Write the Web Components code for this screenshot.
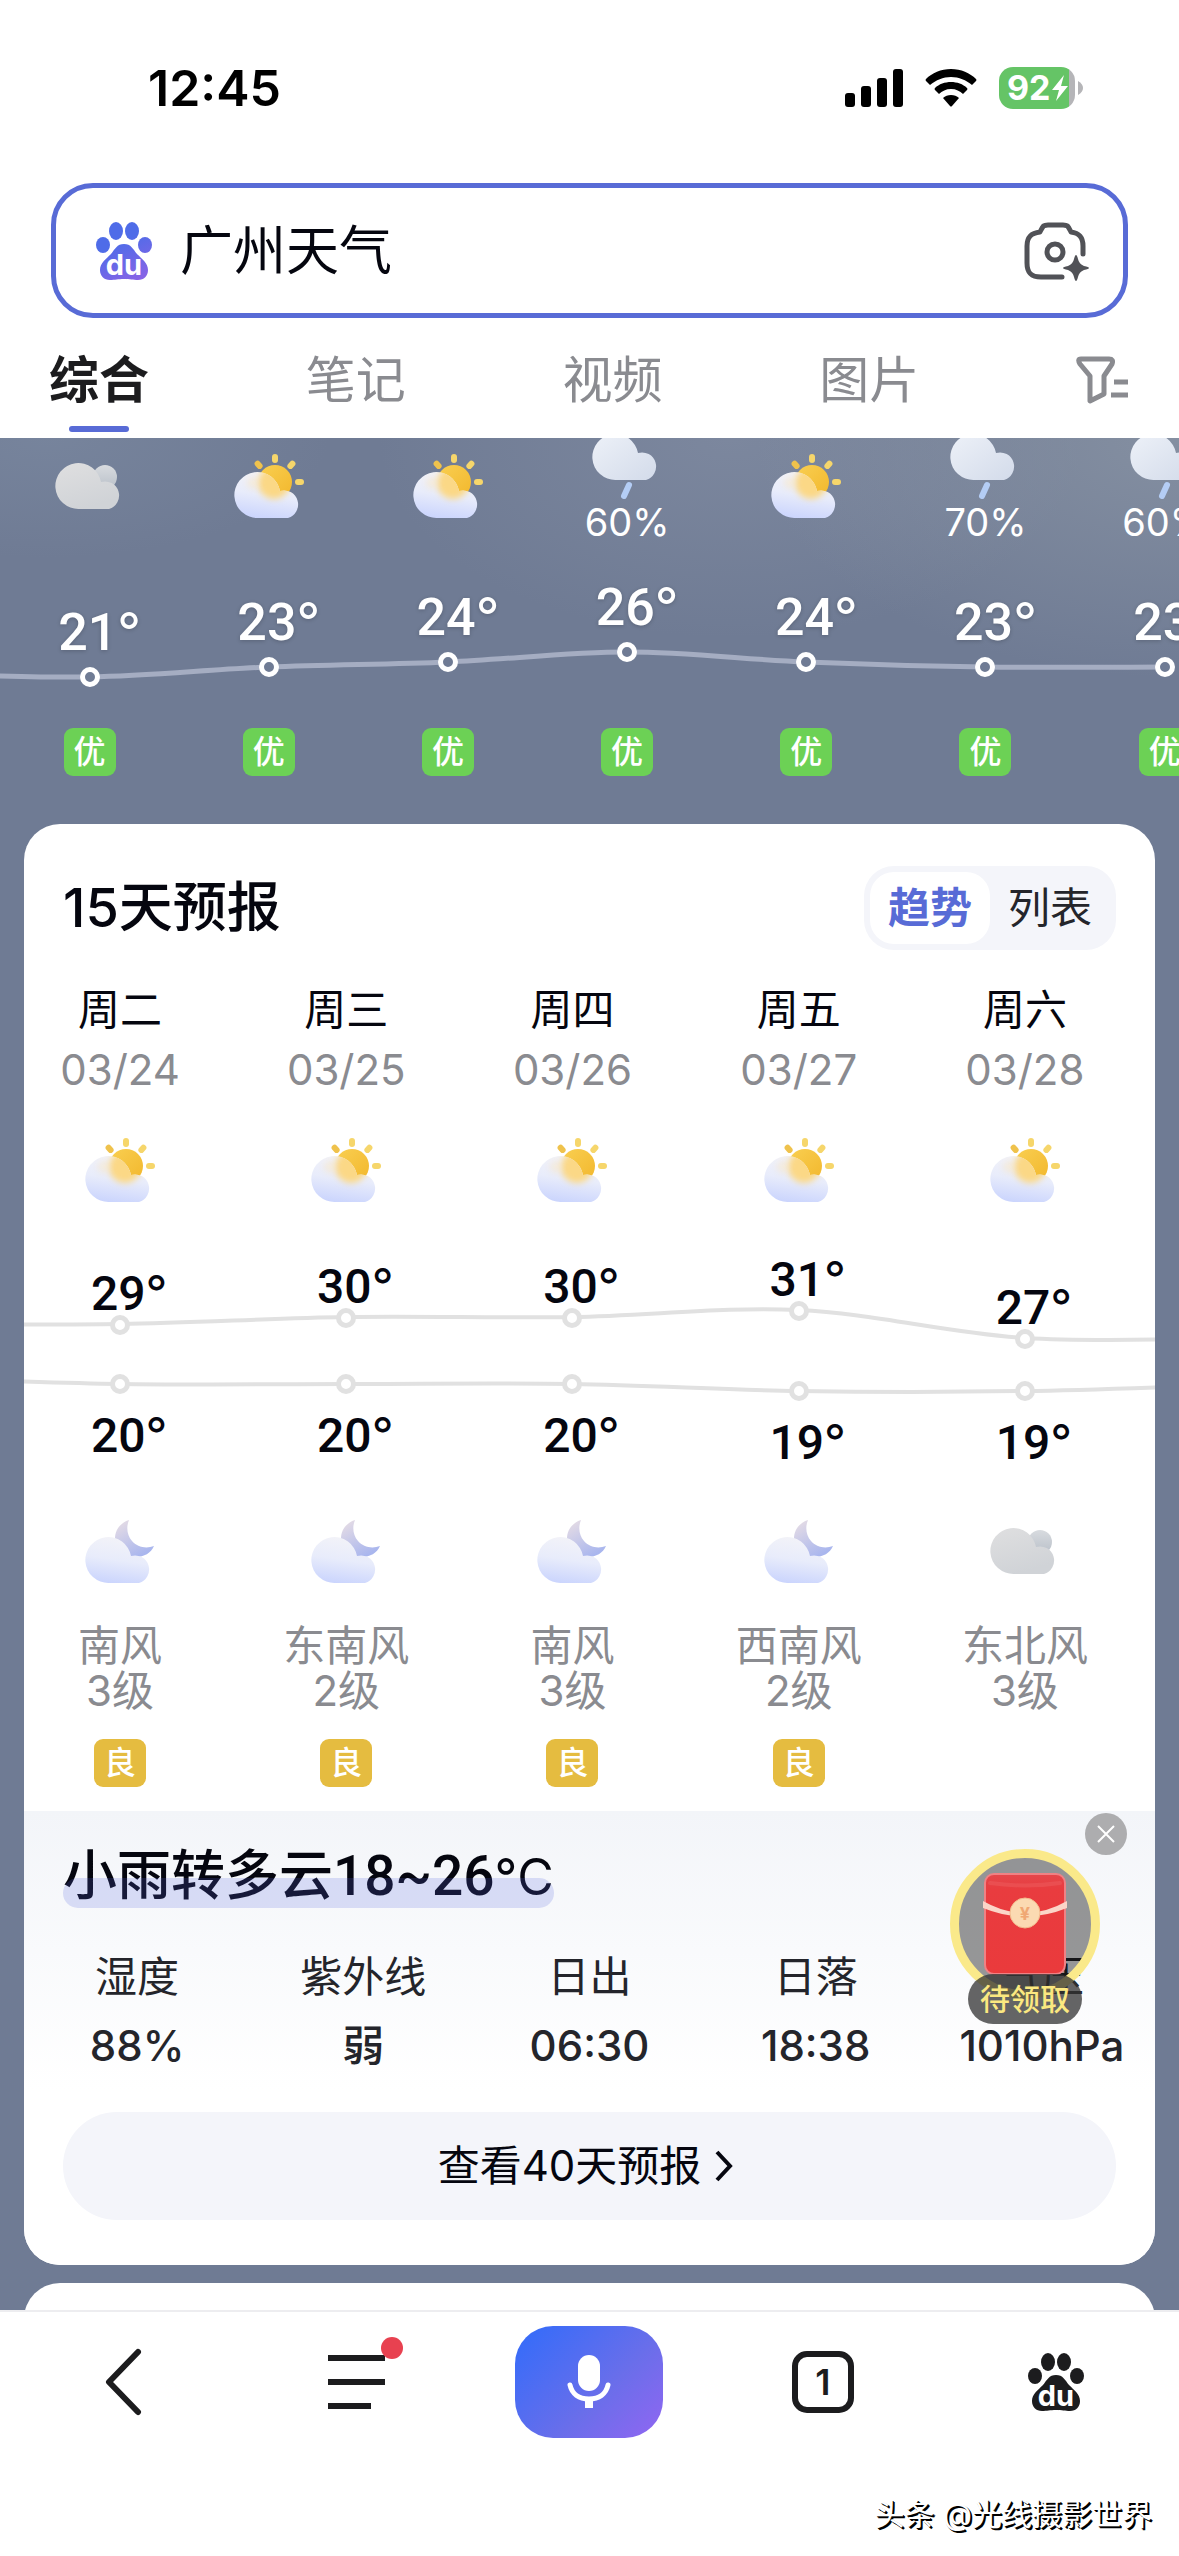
<!DOCTYPE html>
<html lang="zh-CN">
<head>
<meta charset="utf-8">
<meta name="viewport" content="width=device-width, initial-scale=1">
<title>广州天气</title>
<style>
	body {
		margin: 0;
		font-family: Inter, "Noto Sans CJK SC", sans-serif;
		font-size: 42px;
		line-height: 60px;
		color: #05060f;
		background: #fff;
		--brand: #586bd6;
		--sky: #6f7b94;
		--soft: #f4f5fa;
		--muted: #8a8b90;
	}
</style>
</head>
<body>
<weather-page></weather-page>

<script>
const RESET = `
	* { box-sizing: border-box; }
	button, input {
		font: inherit;
		color: inherit;
		margin: 0;
		padding: 0;
		border: 0;
		background: none;
	}
	ul, dl, dd, h2, p { margin: 0; padding: 0; }
	ul { list-style: none; }
	h2 { font-weight: 500; }
	a { color: inherit; text-decoration: none; }
	svg { display: block; }
`;

const HOURS = [
	{ icon: 'cloudy', temp: 21, air: '优' },
	{ icon: 'sunny', temp: 23, air: '优' },
	{ icon: 'sunny', temp: 24, air: '优' },
	{ icon: 'rain', chance: '60%', temp: 26, air: '优' },
	{ icon: 'sunny', temp: 24, air: '优' },
	{ icon: 'rain', chance: '70%', temp: 23, air: '优' },
	{ icon: 'rain', chance: '60%', temp: 23, air: '优' },
];

const DAYS = [
	{ week: '周二', date: '03/24', day: 'sunny', hi: 29, lo: 20, night: 'moon', wind: '南风', level: '3级', air: '良' },
	{ week: '周三', date: '03/25', day: 'sunny', hi: 30, lo: 20, night: 'moon', wind: '东南风', level: '2级', air: '良' },
	{ week: '周四', date: '03/26', day: 'sunny', hi: 30, lo: 20, night: 'moon', wind: '南风', level: '3级', air: '良' },
	{ week: '周五', date: '03/27', day: 'sunny', hi: 31, lo: 19, night: 'moon', wind: '西南风', level: '2级', air: '良' },
	{ week: '周六', date: '03/28', day: 'sunny', hi: 27, lo: 19, night: 'cloudy', wind: '东北风', level: '3级', air: '' },
];

// smooth curve through a list of [x, y]
function curve(points) {
	let d = `M${points[0]}`;
	for (let i = 0; i < points.length - 1; i++) {
		const p0 = points[i - 1] || points[i];
		const p1 = points[i];
		const p2 = points[i + 1];
		const p3 = points[i + 2] || p2;
		d += `C${p1[0] + (p2[0] - p0[0]) / 6},${p1[1] + (p2[1] - p0[1]) / 6}`
			+ ` ${p2[0] - (p3[0] - p1[0]) / 6},${p2[1] - (p3[1] - p1[1]) / 6} ${p2}`;
	}
	return d;
}

class PawLogo extends HTMLElement {
	constructor() {
		super();
		this.attachShadow({ mode: 'open' });
		this.shadowRoot.innerHTML = `
			<style>
				:host { display: block; }
				svg { display: block; width: 56px; height: 60px; }
				.ink { fill: url(#ink); }
				:host([mono]) .ink { fill: #1c1c1e; }
				text { font: 700 29px Inter, sans-serif; fill: #fff; }
			</style>
			<svg viewBox="0 0 56 60" aria-hidden="true">
				<defs>
					<linearGradient id="ink" gradientUnits="userSpaceOnUse" x1="14" y1="0" x2="44" y2="60">
						<stop offset=".35" stop-color="#4f6ce8"/>
						<stop offset="1" stop-color="#8a63e6"/>
					</linearGradient>
				</defs>
				<g class="ink">
					<ellipse cx="20" cy="10" rx="7" ry="9"/>
					<ellipse cx="36" cy="10" rx="7" ry="9"/>
					<ellipse cx="7" cy="24" rx="7" ry="8"/>
					<ellipse cx="49" cy="24" rx="7" ry="8"/>
					<path d="M28 23c7 0 9 5 13 10 5 5 11 9 11 16 0 6-4 10-10 10-5 0-8-1-14-1s-9 1-14 1c-6 0-10-4-10-10 0-7 6-11 11-16 4-5 6-10 13-10z"/>
				</g>
				<text x="28" y="54" text-anchor="middle">du</text>
			</svg>
		`;
	}
}
customElements.define('paw-logo', PawLogo);

class WeatherIcon extends HTMLElement {
	constructor() {
		super();
		this.attachShadow({ mode: 'open' });
	}

	connectedCallback() {
		const cloud = 'M25 68A23 23 0 1 1 47 41A14 14 0 1 1 55 68Z';
		const shapes = {
			sunny: `
				<g fill="#f6d66b">
					<rect x="39" y="4" width="6" height="9" rx="3"/>
					<rect x="39" y="4" width="6" height="9" rx="3" transform="rotate(42 42 33)"/>
					<rect x="39" y="4" width="6" height="9" rx="3" transform="rotate(-42 42 33)" fill="#efc24c"/>
					<rect x="62" y="29" width="9" height="6" rx="3"/>
				</g>
				<circle cx="42" cy="32" r="17" fill="url(#sun)"/>
				<path d="${cloud}" fill="url(#cloud)"/>
				<g clip-path="url(#clip)">
					<circle cx="41" cy="33" r="16" fill="#fbd886" filter="url(#soft)"/>
					<circle cx="20" cy="33" r="6" fill="#fbe6c0" opacity=".5" filter="url(#soft)"/>
				</g>`,
			moon: `
				<path d="M45 5C36 8 31 15 31 24C31 36 40 43 52 42C60 42 67 38 70 31C62 34 53 32 48 26C43 20 42 12 45 5Z" fill="url(#moon)"/>
				<path d="${cloud}" fill="url(#cloud)"/>`,
			cloudy: `
				<circle cx="51" cy="27" r="12" fill="url(#back)"/>
				<path d="${cloud}" fill="url(#grey)" transform="translate(0 -9)"/>`,
			rain: `
				<path d="${cloud}" fill="url(#wet)" transform="translate(0 -18)"/>
				<path d="M38 55L33 66" stroke="#b4cdf5" stroke-width="6" stroke-linecap="round"/>`,
		};
		this.shadowRoot.innerHTML = `
			<style>
				:host { display: block; width: 72px; height: 72px; }
				svg { display: block; width: 100%; height: 100%; }
			</style>
			<svg viewBox="0 0 72 72" fill="none" aria-hidden="true">
				<defs>
					<linearGradient id="cloud" x1=".6" y1="0" x2=".4" y2="1">
						<stop offset="0" stop-color="#f3f3f8"/>
						<stop offset=".5" stop-color="#e8ecfb"/>
						<stop offset="1" stop-color="#cbd5fd"/>
					</linearGradient>
					<linearGradient id="sun" x1="0" y1="0" x2="1" y2="1">
						<stop offset="0" stop-color="#f9cf52"/>
						<stop offset="1" stop-color="#f2b72c"/>
					</linearGradient>
					<linearGradient id="moon" x1="0" y1="0" x2=".6" y2="1">
						<stop offset="0" stop-color="#eadfe4"/>
						<stop offset="1" stop-color="#a9b6ee"/>
					</linearGradient>
					<linearGradient id="grey" x1="0" y1="0" x2=".4" y2="1">
						<stop offset="0" stop-color="#dfdfe0"/>
						<stop offset="1" stop-color="#d0d3d7"/>
					</linearGradient>
					<linearGradient id="back" x1="0" y1="0" x2="0" y2="1">
						<stop offset="0" stop-color="#d8dbdf"/>
						<stop offset="1" stop-color="#b9c0c9"/>
					</linearGradient>
					<linearGradient id="wet" x1="0" y1="0" x2="1" y2="1">
						<stop offset="0" stop-color="#edf1f8"/>
						<stop offset="1" stop-color="#d3dbea"/>
					</linearGradient>
					<filter id="soft" x="-50%" y="-50%" width="200%" height="200%">
						<feGaussianBlur stdDeviation="3"/>
					</filter>
					<clipPath id="clip"><path d="${cloud}"/></clipPath>
				</defs>
				${shapes[this.getAttribute('name')] || ''}
			</svg>
		`;
	}
}
customElements.define('weather-icon', WeatherIcon);

class AirBadge extends HTMLElement {
	constructor() {
		super();
		this.attachShadow({ mode: 'open' });
		this.shadowRoot.innerHTML = `
			<style>
				:host {
					display: block;
					width: 52px;
					border-radius: 9px;
					background: #6cd155;
					color: #fff;
					font-size: 32px;
					font-weight: 500;
					line-height: 48px;
					text-align: center;
				}
				:host([grade="fair"]) { background: #e5bc40; }
			</style>
			<slot></slot>
		`;
	}
}
customElements.define('air-badge', AirBadge);

class StatusBar extends HTMLElement {
	constructor() {
		super();
		this.attachShadow({ mode: 'open' });
		this.shadowRoot.innerHTML = `
			<style>
				${RESET}
				:host {
					display: flex;
					align-items: center;
					justify-content: space-between;
					padding: 63px 96px 70px 148px;
					font-size: 50px;
					font-weight: 600;
					line-height: 50px;
					color: #000;
				}
				.icons { display: flex; align-items: center; gap: 22px; }
				.battery { display: flex; align-items: center; gap: 3px; }
				.level {
					display: flex;
					align-items: center;
					width: 76px;
					height: 42px;
					padding-left: 8px;
					border-radius: 14px;
					background: linear-gradient(90deg, #65c466 92%, #b5b5b8 92%);
					color: #fff;
					font-size: 34px;
					font-weight: 700;
				}
			</style>
			<span>12:45</span>
			<div class="icons">
				<svg width="58" height="38" viewBox="0 0 58 38" aria-hidden="true">
					<rect y="24" width="10" height="14" rx="3"/>
					<rect x="16" y="17" width="10" height="21" rx="3"/>
					<rect x="32" y="9" width="10" height="29" rx="3"/>
					<rect x="48" y="0" width="10" height="38" rx="3"/>
				</svg>
				<svg width="52" height="38" viewBox="0 0 52 38" aria-hidden="true">
					<path d="M26 0C36 0 45 4 51 10Q52 11 51 12L47 16C41 11 34 8 26 8S11 11 5 16L1 12Q0 11 1 10C7 4 16 0 26 0Z"/>
					<path d="M26 13C32 13 38 15 42 19Q43 20 42 21L38 25C35 22 31 20 26 20S17 22 14 25L10 21Q9 20 10 19C14 15 20 13 26 13Z"/>
					<path d="M26 26C29 26 32 27 34 29L27 37Q26 38 25 37L18 29C20 27 23 26 26 26Z"/>
				</svg>
				<div class="battery">
					<div class="level">92<svg width="18" height="26" viewBox="0 0 18 26" aria-hidden="true"><path d="M13 0L1 15h7L5 26 17 11h-7z" fill="#fff"/></svg></div>
					<svg width="5" height="14" viewBox="0 0 5 14" aria-hidden="true"><path d="M0 0Q5 3 5 7T0 14Z" fill="#b5b5b8"/></svg>
				</div>
			</div>
		`;
	}
}
customElements.define('status-bar', StatusBar);

class SearchBox extends HTMLElement {
	constructor() {
		super();
		this.attachShadow({ mode: 'open' });
	}

	connectedCallback() {
		this.shadowRoot.innerHTML = `
			<style>
				${RESET}
				:host { display: block; margin: 0 51px; }
				form {
					display: flex;
					align-items: center;
					height: 135px;
					padding: 0 34px 0 40px;
					border: 5px solid var(--brand);
					border-radius: 42px;
				}
				input {
					flex: 1;
					min-width: 0;
					margin-left: 28px;
					font-size: 53px;
					outline: none;
				}
			</style>
			<form>
				<paw-logo></paw-logo>
				<input type="text" aria-label="搜索" value="${this.getAttribute('value')}">
				<button type="button" aria-label="拍照搜索">
					<svg width="66" height="60" viewBox="0 0 66 60" fill="none" aria-hidden="true">
						<g stroke="#515257" stroke-width="5" stroke-linecap="round" stroke-linejoin="round">
							<path d="M39 56H18C8 56 4 52 4 42V25C4 16 8 12 17 11C20 5 20 4 25 4H40C45 4 45 5 48 11C56 12 60 16 60 25V33"/>
							<circle cx="32" cy="31" r="8"/>
						</g>
						<path d="M53 34Q54 34 55 38Q56 43 61 45Q66 46 66 47Q66 48 61 49Q56 51 55 56Q54 60 53 60Q52 60 51 56Q50 51 45 49Q40 48 40 47Q40 46 45 45Q50 43 51 38Q52 34 53 34Z" fill="#515257"/>
					</svg>
				</button>
			</form>
		`;
	}
}
customElements.define('search-box', SearchBox);

class ResultTabs extends HTMLElement {
	constructor() {
		super();
		this.attachShadow({ mode: 'open' });
		this.shadowRoot.innerHTML = `
			<style>
				${RESET}
				:host { display: block; }
				nav {
					display: flex;
					justify-content: space-between;
					align-items: flex-start;
					padding: 32px 51px 6px 49px;
					font-size: 50px;
					color: var(--muted);
				}
				a { padding-bottom: 22px; }
				a.active {
					padding-bottom: 0;
					color: #1c1c1e;
					font-weight: 700;
				}
				a.active::after {
					content: '';
					display: block;
					width: 60px;
					height: 6px;
					margin: 16px auto 0;
					border-radius: 3px;
					background: var(--brand);
				}
			</style>
			<nav>
				<a class="active" href="#all">综合</a>
				<a href="#notes">笔记</a>
				<a href="#video">视频</a>
				<a href="#images">图片</a>
				<button type="button" aria-label="筛选">
					<svg width="52" height="60" viewBox="0 0 52 60" fill="none" stroke="currentColor" stroke-width="5" stroke-linejoin="round" aria-hidden="true">
						<path d="M5 9H33Q38 9 36 14L28 26V44L14 51V26L4 14Q1 9 5 9Z"/>
						<path d="M38 32H52M35 45H52"/>
					</svg>
				</button>
			</nav>
		`;
	}
}
customElements.define('result-tabs', ResultTabs);

class HourlyForecast extends HTMLElement {
	constructor() {
		super();
		this.attachShadow({ mode: 'open' });
	}

	connectedCallback() {
		const top = (t) => (26 - t) * 5 + 36;
		const points = HOURS.map((h, i) => [i * 100 + 50, top(h.temp) + 74]);
		points.unshift([-50, points[0][1] - 4]);
		this.shadowRoot.innerHTML = `
			<style>
				${RESET}
				:host { display: block; overflow: hidden; color: #fff; }
				/* six and a half hours fit in the window */
				.rail {
					position: relative;
					display: grid;
					grid-template-columns: repeat(7, 1fr);
					width: calc(100% * 7 / 6.58);
					margin-top: -8px;
					padding-bottom: 48px;
				}
				li { display: grid; justify-items: center; }
				.sky {
					display: flex;
					flex-direction: column;
					align-items: center;
					justify-content: center;
					height: 112px;
					font-size: 38px;
					line-height: 40px;
				}
				.plot {
					display: flex;
					flex-direction: column;
					align-items: center;
					gap: 4px;
					height: 186px;
				}
				.temp {
					padding-left: 20px;
					font-family: Roboto, sans-serif;
					font-size: 52px;
					font-weight: 500;
					text-shadow: 0 1px 4px rgba(0, 0, 0, .2);
				}
				.temp span { font: 400 52px/52px Inter, sans-serif; }
				.dot {
					width: 20px;
					height: 20px;
					border: 5px solid #fff;
					border-radius: 50%;
					background: var(--sky);
					z-index: 1;
				}
				.line {
					position: absolute;
					left: 0;
					top: 112px;
					width: 100%;
					height: 186px;
				}
			</style>
			<ul class="rail">
				<svg class="line" viewBox="0 0 700 186" preserveAspectRatio="none" fill="none" aria-hidden="true">
					<path d="${curve(points)}" stroke="#a5adc2" stroke-width="5" vector-effect="non-scaling-stroke"/>
				</svg>
				${HOURS.map((h) => `
					<li>
						<div class="sky">
							<weather-icon name="${h.icon}"></weather-icon>
							${h.chance ? `<span>${h.chance}</span>` : ''}
						</div>
						<div class="plot" style="padding-top: ${top(h.temp)}px">
							<div class="temp">${h.temp}<span>°</span></div>
							<i class="dot"></i>
						</div>
						<air-badge>${h.air}</air-badge>
					</li>`).join('')}
			</ul>
		`;
	}
}
customElements.define('hourly-forecast', HourlyForecast);

class DailyForecast extends HTMLElement {
	constructor() {
		super();
		this.attachShadow({ mode: 'open' });
	}

	connectedCallback() {
		const hiTop = (t) => (31 - t) * 7 + 52;
		const loTop = (t) => (20 - t) * 7 + 168;
		const x = (i) => i * 100 + 50;
		// the first and last values lie outside the window
		const hi = [29, ...DAYS.map((d) => d.hi), 27].map((t, i) => [x(i - 1), hiTop(t) + 52]);
		const lo = [21, ...DAYS.map((d) => d.lo), 20].map((t, i) => [x(i - 1), loTop(t) + 10]);
		this.shadowRoot.innerHTML = `
			<style>
				${RESET}
				:host { display: block; overflow: hidden; }
				.rail {
					position: relative;
					display: grid;
					grid-template-columns: repeat(5, 1fr);
					margin: 30px 17px 0 -17px;
					padding-bottom: 24px;
				}
				li {
					display: flex;
					flex-direction: column;
					align-items: center;
				}
				.date, .wind { color: var(--muted); }
				.day { margin-top: 34px; }
				.plot {
					display: grid;
					justify-items: center;
					align-items: start;
					height: 309px;
				}
				.hi, .lo {
					grid-area: 1 / 1;
					display: flex;
					flex-direction: column;
					align-items: center;
				}
				.lo { gap: 20px; }
				.temp {
					padding-left: 18px;
					font-family: Roboto, sans-serif;
					font-size: 48px;
					font-weight: 500;
					line-height: 42px;
				}
				.temp span { font: 400 48px/42px Inter, sans-serif; }
				.dot {
					width: 20px;
					height: 20px;
					border: 5px solid #e1e1e1;
					border-radius: 50%;
					background: #fff;
					z-index: 1;
				}
				.wind {
					margin-top: 36px;
					line-height: 45px;
					text-align: center;
				}
				air-badge { margin-top: 26px; }
				.line {
					position: absolute;
					left: 0;
					top: 226px;
					width: 100%;
					height: 309px;
					overflow: visible;
				}
			</style>
			<ul class="rail">
				<svg class="line" viewBox="0 0 500 309" preserveAspectRatio="none" fill="none" stroke="#e1e1e1" stroke-width="4" aria-hidden="true">
					<path d="${curve(hi)}" vector-effect="non-scaling-stroke"/>
					<path d="${curve(lo)}" vector-effect="non-scaling-stroke"/>
				</svg>
				${DAYS.map((d) => `
					<li>
						<div>${d.week}</div>
						<div class="date">${d.date}</div>
						<weather-icon class="day" name="${d.day}"></weather-icon>
						<div class="plot">
							<div class="hi" style="padding-top: ${hiTop(d.hi)}px">
								<div class="temp">${d.hi}<span>°</span></div>
								<i class="dot"></i>
							</div>
							<div class="lo" style="padding-top: ${loTop(d.lo)}px">
								<i class="dot"></i>
								<div class="temp">${d.lo}<span>°</span></div>
							</div>
						</div>
						<weather-icon name="${d.night}"></weather-icon>
						<div class="wind">${d.wind}<br>${d.level}</div>
						${d.air ? `<air-badge grade="fair">${d.air}</air-badge>` : ''}
					</li>`).join('')}
			</ul>
		`;
	}
}
customElements.define('daily-forecast', DailyForecast);

class WeatherSummary extends HTMLElement {
	constructor() {
		super();
		this.attachShadow({ mode: 'open' });
		this.shadowRoot.innerHTML = `
			<style>
				${RESET}
				:host {
					display: block;
					padding: 30px 0 45px;
					background: linear-gradient(#f3f5f9, #fff 280px);
				}
				h2 {
					position: relative;
					width: fit-content;
					margin: 0 39px;
					font-size: 54px;
					line-height: 70px;
				}
				h2 b { font: 500 55px/70px Roboto, sans-serif; }
				h2 span { font-weight: 400; font-size: 50px; }
				h2::after {
					content: '';
					position: absolute;
					left: 0;
					right: 0;
					bottom: 4px;
					height: 30px;
					border-radius: 15px;
					background: rgba(90, 107, 225, .2);
				}
				dl {
					display: grid;
					grid-template-columns: repeat(5, 1fr);
					margin-top: 35px;
					text-align: center;
					color: #24252b;
				}
				dl div { display: grid; justify-content: center; gap: 9px; }
				dd { font-weight: 500; }
				.more {
					display: flex;
					align-items: center;
					justify-content: center;
					gap: 14px;
					height: 108px;
					margin: 36px 39px 0;
					padding-right: 8px;
					border-radius: 54px;
					background: var(--soft);
				}
			</style>
			<h2>小雨转多云<b>18~26</b><span>°C</span></h2>
			<dl>
				<div><dt>湿度</dt><dd>88%</dd></div>
				<div><dt>紫外线</dt><dd>弱</dd></div>
				<div><dt>日出</dt><dd>06:30</dd></div>
				<div><dt>日落</dt><dd>18:38</dd></div>
				<div><dt>气压</dt><dd>1010hPa</dd></div>
			</dl>
			<a class="more" href="#forecast-40">查看40天预报<svg width="18" height="32" viewBox="0 0 18 32" fill="none" stroke="#05060f" stroke-width="4" aria-hidden="true"><path d="M2 2L15 16L2 30"/></svg></a>
		`;
	}
}
customElements.define('weather-summary', WeatherSummary);

class ForecastCard extends HTMLElement {
	constructor() {
		super();
		this.attachShadow({ mode: 'open' });
		this.shadowRoot.innerHTML = `
			<style>
				${RESET}
				:host {
					display: block;
					margin: 0 24px;
					border-radius: 36px;
					background: #fff;
					overflow: hidden;
				}
				header {
					display: flex;
					align-items: center;
					justify-content: space-between;
					padding: 42px 39px 0;
				}
				h2 { font-size: 54px; }
				.switch {
					display: flex;
					padding: 6px;
					border-radius: 30px;
					background: var(--soft);
				}
				.switch button {
					width: 120px;
					border-radius: 24px;
					line-height: 72px;
					color: #24252b;
				}
				.switch button[aria-pressed="true"] {
					background: #fff;
					color: var(--brand);
					font-weight: 700;
				}
			</style>
			<header>
				<h2>15天预报</h2>
				<div class="switch">
					<button type="button" aria-pressed="true">趋势</button>
					<button type="button" aria-pressed="false">列表</button>
				</div>
			</header>
			<slot></slot>
		`;
		this.shadowRoot.querySelector('.switch').addEventListener('click', this.#select.bind(this));
	}

	#select(event) {
		const picked = event.target.closest('button');
		if (!picked) return;
		this.shadowRoot.querySelectorAll('.switch button').forEach((button) => {
			button.setAttribute('aria-pressed', button === picked);
		});
	}
}
customElements.define('forecast-card', ForecastCard);

class RedPacket extends HTMLElement {
	constructor() {
		super();
		this.attachShadow({ mode: 'open' });
		this.shadowRoot.innerHTML = `
			<style>
				${RESET}
				:host { display: flex; flex-direction: column; align-items: flex-end; }
				.close {
					display: grid;
					place-items: center;
					width: 42px;
					height: 42px;
					border-radius: 50%;
					background: #adadaf;
				}
				.packet {
					display: flex;
					flex-direction: column;
					align-items: center;
					margin: -6px 27px 0 0;
				}
				.ring {
					display: grid;
					place-items: center;
					width: 150px;
					height: 150px;
					border: 9px solid #fae98a;
					border-radius: 50%;
					background: rgba(0, 0, 0, .4);
				}
				.label {
					margin-top: -25px;
					padding: 0 12px;
					border-radius: 25px;
					background: rgba(50, 50, 50, .75);
					color: #fbe880;
					font-size: 30px;
					font-weight: 500;
					line-height: 50px;
				}
				text { font: 700 18px Inter, sans-serif; fill: #f0a874; }
			</style>
			<button class="close" type="button" aria-label="关闭">
				<svg width="18" height="18" viewBox="0 0 18 18" stroke="#fff" stroke-width="2" aria-hidden="true"><path d="M1 1L17 17M17 1L1 17"/></svg>
			</button>
			<button class="packet" type="button">
				<span class="ring">
					<svg width="86" height="102" viewBox="0 0 86 102" aria-hidden="true">
						<defs>
							<linearGradient id="red" x1="0" y1="0" x2="0" y2="1">
								<stop offset="0" stop-color="#e4474b"/>
								<stop offset=".15" stop-color="#e93c3f"/>
								<stop offset="1" stop-color="#ea3a3c"/>
							</linearGradient>
						</defs>
						<rect x="3" y="1" width="80" height="100" rx="9" fill="url(#red)" stroke="#f08184" stroke-width="2"/>
						<path d="M8 10Q43 15 78 10" fill="none" stroke="#f0696b" stroke-width="4" stroke-linecap="round" opacity=".35"/>
						<path d="M1 28Q43 52 85 28V35Q43 52 1 35Z" fill="#fbd5c8"/>
						<circle cx="43" cy="40" r="15" fill="#fbdab2" stroke="#f3bb8d"/>
						<text x="43" y="47" text-anchor="middle">¥</text>
					</svg>
				</span>
				<span class="label">待领取</span>
			</button>
		`;
		this.shadowRoot.querySelector('.close').addEventListener('click', () => this.remove());
	}
}
customElements.define('red-packet', RedPacket);

class BottomBar extends HTMLElement {
	constructor() {
		super();
		this.attachShadow({ mode: 'open' });
		this.shadowRoot.innerHTML = `
			<style>
				${RESET}
				:host {
					display: block;
					border-top: 2px solid #ededf0;
					background: #fff;
				}
				nav {
					display: grid;
					grid-template-columns: repeat(5, 1fr);
					place-items: center;
					padding: 14px 6px 0;
				}
				.menu { position: relative; }
				.menu::after {
					content: '';
					position: absolute;
					right: -18px;
					top: -18px;
					width: 22px;
					height: 22px;
					border-radius: 50%;
					background: #e84150;
				}
				.voice {
					display: grid;
					place-items: center;
					width: 148px;
					height: 112px;
					border-radius: 38px;
					background: linear-gradient(135deg, #3a6cf8 10%, #6a6eea 60%, #9166f2);
				}
				.pages {
					width: 62px;
					border: 6px solid #1c1c1e;
					border-radius: 15px;
					font-size: 36px;
					font-weight: 600;
					line-height: 50px;
					color: #1c1c1e;
				}
				p {
					padding: 56px 27px 22px;
					font-size: 30px;
					line-height: 40px;
					text-align: right;
					color: #fff;
					text-shadow: 2px 2px 0 #000, 1px 1px 0 #000;
				}
			</style>
			<nav>
				<button type="button" aria-label="返回">
					<svg width="38" height="68" viewBox="0 0 38 68" fill="none" stroke="#1c1c1e" stroke-width="6" stroke-linecap="round" stroke-linejoin="round" aria-hidden="true"><path d="M34 4L5 34L34 64"/></svg>
				</button>
				<button class="menu" type="button" aria-label="菜单">
					<svg width="57" height="54" viewBox="0 0 57 54" fill="#1c1c1e" aria-hidden="true"><path d="M0 0H57V6H0ZM0 24H57V30H0ZM0 48H43V54H0Z"/></svg>
				</button>
				<button class="voice" type="button" aria-label="语音搜索">
					<svg width="44" height="56" viewBox="0 0 44 56" fill="none" stroke="#fff" stroke-linecap="round" aria-hidden="true">
						<rect x="11" y="1" width="22" height="36" rx="11" fill="#fff" stroke="none"/>
						<path d="M3 31C5 40 12 45 22 45S39 40 41 31" stroke-width="5"/>
						<path d="M22 45V54" stroke-width="8" stroke-linecap="butt"/>
					</svg>
				</button>
				<button class="pages" type="button">1</button>
				<button type="button" aria-label="首页"><paw-logo mono></paw-logo></button>
			</nav>
			<p>头条 @光线摄影世界</p>
		`;
	}
}
customElements.define('bottom-bar', BottomBar);

class WeatherPage extends HTMLElement {
	constructor() {
		super();
		this.attachShadow({ mode: 'open' });
		this.shadowRoot.innerHTML = `
			<style>
				:host {
					display: flex;
					flex-direction: column;
					height: 100vh;
				}
				main {
					position: relative;
					flex: 1;
					min-height: 0;
					overflow: hidden;
					background:
						radial-gradient(ellipse 36% 240px at 100% 0, rgba(150, 160, 172, .55), transparent),
						radial-gradient(ellipse 30% 200px at 62% 0, rgba(140, 150, 170, .45), transparent),
						radial-gradient(ellipse 24% 120px at 4% 0, rgba(130, 145, 168, .4), transparent),
						var(--sky);
				}
				.next {
					height: 400px;
					margin: 18px 24px 0;
					border-radius: 36px;
					background: #fff;
				}
				/* floats above the scrolled cards */
				red-packet {
					position: absolute;
					right: 52px;
					bottom: 286px;
				}
			</style>
			<status-bar></status-bar>
			<search-box value="广州天气"></search-box>
			<result-tabs></result-tabs>
			<main>
				<hourly-forecast></hourly-forecast>
				<forecast-card>
					<daily-forecast></daily-forecast>
					<weather-summary></weather-summary>
				</forecast-card>
				<div class="next"></div>
				<red-packet></red-packet>
			</main>
			<bottom-bar></bottom-bar>
		`;
	}
}
customElements.define('weather-page', WeatherPage);
</script>
</body>
</html>
